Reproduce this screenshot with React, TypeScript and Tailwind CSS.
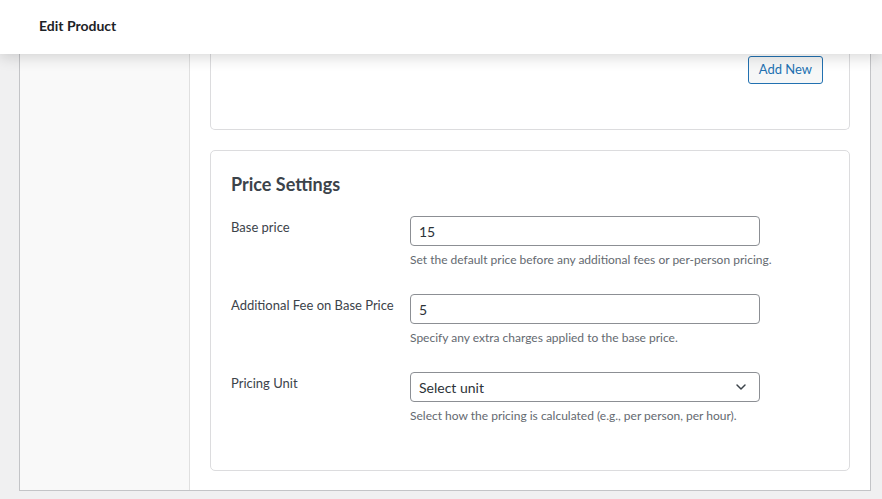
import { ChevronDown } from 'lucide-react';

const font = { fontFamily: 'Lato, "Noto Sans", Arial, sans-serif' };

function Row({
  label,
  hint,
  children,
}: {
  label: string;
  hint: string;
  children: React.ReactNode;
}) {
  return (
    <div className="flex">
      <div className="w-[179px] shrink-0 pt-[1px] text-[13px] leading-5 text-[#3c434a]">{label}</div>
      <div className="flex w-[350px] flex-col">
        {children}
        <p className="mt-[6px] whitespace-nowrap text-[12px] leading-4 text-[#646970]">{hint}</p>
      </div>
    </div>
  );
}

function TextInput({ value }: { value: string }) {
  return (
    <div className="flex h-[30px] items-center rounded-[4px] border border-[#8c8f94] bg-white px-2 text-[14px] text-[#2c3338]">
      {value}
    </div>
  );
}

export default function App() {
  return (
    <div className="h-[499px] w-[882px] overflow-hidden bg-[#f0f0f1]" style={font}>
      <header className="relative z-10 flex h-[54px] items-center bg-white pb-[3px] pl-[39px] shadow-[0_3px_14px_rgba(0,0,0,0.16)]">
        <h1 className="text-[14px] font-bold text-[#1d2327]">Edit Product</h1>
      </header>

      <div className="ml-[19px] flex h-[437px] w-[852px] border-x border-b border-[#c3c4c7] bg-white">
        <aside className="w-[170px] shrink-0 border-r border-[#e0e0e0] bg-[#f9f9f9]" />

        <main className="flex flex-1 flex-col gap-5 px-5">
          <section className="flex h-[76px] shrink-0 justify-end rounded-b-[5px] border-x border-b border-[#dcdcde] pr-[26px] pt-[2px]">
            <button className="h-[28px] rounded-[3px] border border-[#2271b1] bg-[#f6f7f7] px-[10px] text-[13px] text-[#2271b1]">
              Add New
            </button>
          </section>

          <section className="shrink-0 rounded-[5px] border border-[#dcdcde] px-5 pb-[46px] pt-[21px]">
            <h2 className="text-[18px] font-bold leading-6 text-[#3c434a]">Price Settings</h2>
            <div className="mt-5 flex flex-col gap-[26px]">
              <Row label="Base price" hint="Set the default price before any additional fees or per-person pricing.">
                <TextInput value="15" />
              </Row>
              <Row label="Additional Fee on Base Price" hint="Specify any extra charges applied to the base price.">
                <TextInput value="5" />
              </Row>
              <Row label="Pricing Unit" hint="Select how the pricing is calculated (e.g., per person, per hour).">
                <div className="flex h-[30px] items-center justify-between rounded-[4px] border border-[#8c8f94] bg-white pl-2 pr-[10px] text-[14px] text-[#2c3338]">
                  <span>Select unit</span>
                  <ChevronDown size={16} strokeWidth={2.2} className="text-[#3c434a]" />
                </div>
              </Row>
            </div>
          </section>
        </main>
      </div>
    </div>
  );
}
